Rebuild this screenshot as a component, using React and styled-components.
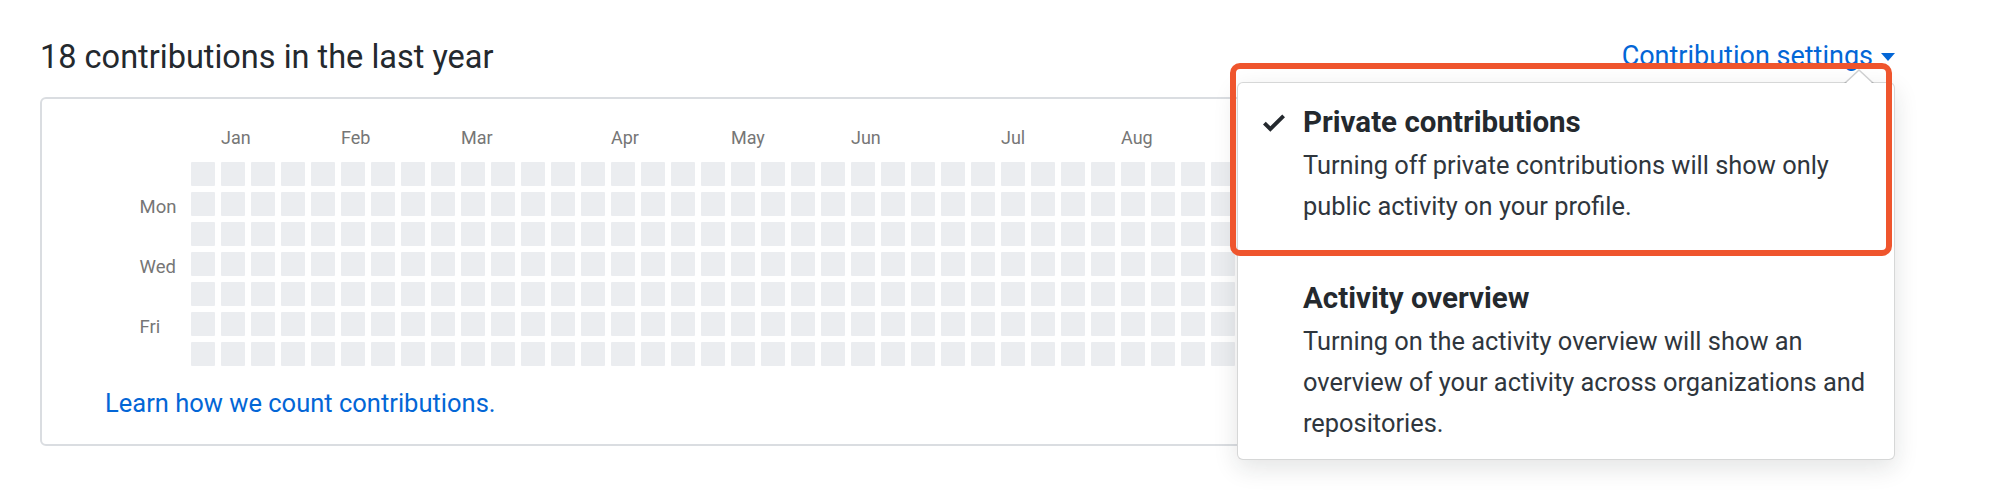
import React from "react";
import styled, { createGlobalStyle } from "styled-components";

const GlobalStyle = createGlobalStyle`
  html, body {
    margin: 0;
    padding: 0;
    background: #fff;
  }
  body {
    font-family: Roboto, "Liberation Sans", Arial, sans-serif;
    color: #24292e;
  }
  * {
    box-sizing: border-box;
  }
`;

const WEEKS = 53;

// months past Aug sit under the open menu, so they are left out
const months = [
  { name: "Jan", col: 1 },
  { name: "Feb", col: 5 },
  { name: "Mar", col: 9 },
  { name: "Apr", col: 14 },
  { name: "May", col: 18 },
  { name: "Jun", col: 22 },
  { name: "Jul", col: 27 },
  { name: "Aug", col: 31 },
];

const days = ["", "Mon", "", "Wed", "", "Fri", ""];

export default function App() {
  const cells = Array.from({ length: WEEKS * 7 }, (_, i) => i);

  return (
    <>
      <GlobalStyle />
      <Page>
        <Section>
          <Header>
            <Title>18 contributions in the last year</Title>
            <SettingsWrap>
              <SettingsLink>
                Contribution settings
                <Caret />
              </SettingsLink>
              <Menu>
                <Highlight />
                <MenuItem>
                  <IconSlot>
                    <CheckIcon viewBox="0 0 12 16">
                      <path d="M12 5l-8 8-4-4 1.5-1.5L4 10l6.5-6.5L12 5z" />
                    </CheckIcon>
                  </IconSlot>
                  <ItemText>
                    <ItemTitle>Private contributions</ItemTitle>
                    <ItemDesc>
                      Turning off private contributions will show only
                      <br />
                      public activity on your profile.
                    </ItemDesc>
                  </ItemText>
                </MenuItem>
                <MenuItem>
                  <IconSlot />
                  <ItemText>
                    <ItemTitle>Activity overview</ItemTitle>
                    <ItemDesc>
                      Turning on the activity overview will show an
                      <br />
                      overview of your activity across organizations and
                      <br />
                      repositories.
                    </ItemDesc>
                  </ItemText>
                </MenuItem>
              </Menu>
            </SettingsWrap>
          </Header>

          <GraphBox>
            <Graph>
              <Months>
                {months.map((m) => (
                  <MonthLabel key={m.name} $col={m.col}>
                    {m.name}
                  </MonthLabel>
                ))}
              </Months>
              <DayLabels>
                {days.map((d, i) => (
                  <DayLabel key={i}>{d}</DayLabel>
                ))}
              </DayLabels>
              <Cells>
                {cells.map((c) => (
                  <Cell key={c} />
                ))}
              </Cells>
            </Graph>
            <LearnLink href="#">Learn how we count contributions.</LearnLink>
          </GraphBox>
        </Section>
      </Page>
    </>
  );
}

const Page = styled.div`
  padding: 38.5px 0 0 40px;
  height: 496px;
  overflow: hidden;
`;

const Section = styled.div`
  width: 1855px;
  position: relative;
`;

const Header = styled.div`
  display: flex;
  justify-content: space-between;
  align-items: flex-start;
  height: 38px;
  position: relative;
  z-index: 2;
`;

const Title = styled.h2`
  margin: 0;
  font-size: 32.5px;
  font-weight: 400;
  line-height: 37.5px;
  color: #24292e;
  white-space: nowrap;
`;

const SettingsWrap = styled.div`
  position: relative;
  margin-top: 2.3px;
`;

const SettingsLink = styled.div`
  display: flex;
  align-items: center;
  gap: 8px;
  font-size: 27px;
  line-height: 30px;
  color: #0366d6;
  white-space: nowrap;
`;

const Caret = styled.span`
  display: inline-block;
  width: 0;
  height: 0;
  margin-top: 3px;
  border-left: 7.5px solid transparent;
  border-right: 7.5px solid transparent;
  border-top: 8px solid #0366d6;
`;

const Menu = styled.div`
  position: absolute;
  top: 41.2px;
  right: 0;
  width: 658px;
  background: #fff;
  border: 1px solid rgba(27, 31, 35, 0.18);
  border-radius: 6px;
  box-shadow: 0 8px 24px rgba(27, 31, 35, 0.12);
  display: flex;
  flex-direction: column;
  gap: 16.5px;

  &::before {
    content: "";
    position: absolute;
    top: -14px;
    right: 20px;
    border-left: 15px solid transparent;
    border-right: 15px solid transparent;
    border-bottom: 14px solid rgba(27, 31, 35, 0.2);
  }
  &::after {
    content: "";
    position: absolute;
    top: -12px;
    right: 21px;
    border-left: 14px solid transparent;
    border-right: 14px solid transparent;
    border-bottom: 13px solid #fff;
  }
`;

const Highlight = styled.div`
  position: absolute;
  top: -20px;
  left: -8px;
  right: 2px;
  height: 193px;
  border: 6px solid #ef552d;
  border-radius: 10px;
  pointer-events: none;
  z-index: 3;
`;

const MenuItem = styled.div`
  display: flex;
  align-items: flex-start;
  padding: 17.5px 24px 15px 25px;
`;

const IconSlot = styled.div`
  width: 40px;
  flex: none;
  padding-top: 8px;
`;

const CheckIcon = styled.svg`
  display: block;
  width: 22px;
  height: 29.3px;
  fill: #24292e;
`;

const ItemText = styled.div`
  display: flex;
  flex-direction: column;
`;

const ItemTitle = styled.div`
  font-size: 29.5px;
  font-weight: 700;
  line-height: 45px;
  color: #24292e;
  white-space: nowrap;
`;

const ItemDesc = styled.div`
  font-size: 25.4px;
  line-height: 41px;
  color: #2f363d;
  white-space: nowrap;
`;

const GraphBox = styled.div`
  margin-top: 20.2px;
  border: 2px solid #dadde1;
  border-radius: 6px;
  padding: 27.1px 0 26px 63px;
`;

const Graph = styled.div`
  display: grid;
  grid-template-columns: 51.4px auto;
  grid-template-rows: 24px auto;
  row-gap: 12.5px;
  margin-left: 34.6px;
`;

const Months = styled.div`
  grid-column: 2;
  grid-row: 1;
  display: grid;
  grid-template-columns: repeat(${WEEKS}, 24px);
  column-gap: 6px;
`;

const MonthLabel = styled.span`
  grid-column: ${(p) => p.$col + 1} / span 4;
  font-size: 18px;
  line-height: 24px;
  color: #767676;
  white-space: nowrap;
`;

const DayLabels = styled.div`
  grid-column: 1;
  grid-row: 2;
  display: grid;
  grid-template-rows: repeat(7, 30px);
  margin-bottom: -6px;
`;

const DayLabel = styled.span`
  font-size: 18.5px;
  line-height: 30px;
  color: #767676;
`;

const Cells = styled.div`
  grid-column: 2;
  grid-row: 2;
  display: grid;
  grid-template-rows: repeat(7, 24px);
  grid-auto-flow: column;
  grid-auto-columns: 24px;
  gap: 6px;
`;

const Cell = styled.div`
  background: #ebedf0;
  border-radius: 1px;
`;

const LearnLink = styled.a`
  display: block;
  margin-top: 21.7px;
  font-size: 25.5px;
  line-height: 30px;
  color: #0366d6;
  text-decoration: none;
  white-space: nowrap;
`;
